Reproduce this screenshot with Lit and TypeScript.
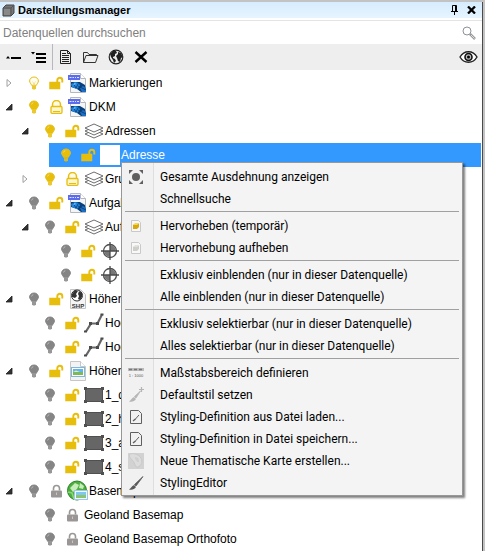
import { LitElement, html, css, svg, nothing } from "lit";
import { customElement } from "lit/decorators.js";
import { classMap } from "lit/directives/class-map.js";

const YELLOW = "#e8be0c";

const bulb = (state: string) => {
  const c = state === "off" ? "#858585" : YELLOW;
  return svg`<svg width="12" height="14" viewBox="0 0 12 14">
    <path d="M6 1C3.4 1 1.6 2.8 1.6 5c0 1.700 1.500 2.700 2 4.300h4.800c.5-1.600 2-2.600 2-4.300C10.400 2.800 8.600 1 6 1z"
      fill=${state === "outline" ? "#fffdf2" : c} stroke=${c} stroke-width="1"/>
    ${state === "outline" ? svg`<path d="M4.500 5.500L5.500 7v2.500M7.500 5.500L6.500 7v2.500" fill="none" stroke="#f0d97a" stroke-width=".7"/>` : svg`<path d="M3.500 4.500c.2-1 .9-1.700 1.800-1.900" fill="none" stroke="#fff" stroke-opacity=".5" stroke-width=".8"/>`}
    <path d="M4 10h4v2.200L7 13.500H5L4 12.200z" fill=${c} fill-opacity=".85"/>
  </svg>`;
};

const lock = (state: string) => {
  if (state === "open")
    return svg`<svg width="15" height="14" viewBox="0 0 15 14">
      <path d="M1 6.500h9.500v6H1z" fill=${YELLOW} stroke=${YELLOW} stroke-width="1.500"/>
      <path d="M8.300 7V4.300a2.500 2.500 0 0 1 5 0V6.500" fill="none" stroke=${YELLOW} stroke-width="1.900"/>
    </svg>`;
  if (state === "outline")
    return svg`<svg width="15" height="14" viewBox="0 0 15 14">
      <path d="M3.500 6.500V4.500a4 4 0 0 1 8 0V6.500" fill="#fffbe6" stroke=${YELLOW} stroke-width="1.500"/>
      <rect x="2" y="6.500" width="11" height="6.800" rx="1" fill="#fdf6d2" stroke=${YELLOW} stroke-width="1.300"/>
      <path d="M4 11.500h7" stroke=${YELLOW} stroke-width="1"/>
    </svg>`;
  return svg`<svg width="15" height="14" viewBox="0 0 15 14">
    <path d="M4.500 6.500V4.500a3 3 0 0 1 6 0V6.500" fill="none" stroke="#9a9696" stroke-width="1.600"/>
    <rect x="2" y="6.500" width="11" height="7" rx="1" fill="#9a9696"/>
    <path d="M7.500 8.500v2.500" stroke="#c8c6c6"/>
  </svg>`;
};

const kinds: Record<string, unknown> = {
  file: svg`<svg width="20" height="22" viewBox="0 0 20 22">
    <path d="M2.500 1.500h10l5 5v14h-15z" fill="#f4f5f7" stroke="#b4b8be"/>
    <path d="M12.500 1.500v5h5" fill="#fff" stroke="#b4b8be"/>
    <rect x="0" y="3" width="12" height="5" fill="#5c6cec"/>
    <path d="M1.500 5.500h2M4.500 5.500h1.500M7 5.500h1M9 5.500h2" stroke="#dfe3ff" stroke-width="1.200"/>
    <path d="M3 10h9l5 3 1 7h-5l-4-3-6-2z" fill="#0b3f7c"/>
    <path d="M3 12l4-2 4 1 1 3-3 3-5-2z" fill="#1f86e0"/>
    <path d="M12 16l3-2 3 2v4h-4z" fill="#1c6fc4"/>
    <path d="M5 11l3 5M11 10l-3 6M10 14l8 4" stroke="#0a2f5e" stroke-width=".7"/>
    <path d="M5 12l2-1 1 1-2 1z" fill="#74bdf8"/>
  </svg>`,
  layers: svg`<svg width="20" height="16" viewBox="0 0 20 16" fill="#fff" stroke="#5c5c5c" stroke-width=".9">
    <path d="M1 11l9-4 9 4-9 4z"/><path d="M1 8l9-4 9 4-9 4z"/><path d="M1 5l9-4 9 4-9 4z"/>
  </svg>`,
  blank: svg`<svg width="20" height="20" viewBox="0 0 20 20"><rect width="20" height="20" fill="#fff"/></svg>`,
  point: svg`<svg width="20" height="20" viewBox="0 0 20 20">
    <circle cx="10" cy="10" r="6.500" fill="#fff" stroke="#4c4c4c" stroke-width="1.300"/>
    <path d="M10 10V4a6 6 0 0 1 6 6zM10 10v6a6 6 0 0 1-6-6z" fill="#777"/>
    <path d="M10 1v18M1 10h18" stroke="#4c4c4c" stroke-width="1.300"/>
  </svg>`,
  shp: svg`<svg width="20" height="22" viewBox="0 0 20 22">
    <path d="M2.500 1.500h10l5 5v14h-15z" fill="#f5f5f5" stroke="#c4c4c4"/>
    <circle cx="9" cy="7.500" r="5.500" fill="#fff" stroke="#333"/>
    <path d="M4 6l3-4 3 1-2 3 1 2-2 2-3-1zM11 3l3 2v4l-2 3-2-1 1-3-1-2z" fill="#333"/>
    <rect x="3" y="14" width="14" height="6" fill="#f5f5f5"/>
    <text x="10" y="20" text-anchor="middle" font-family="Liberation Sans, sans-serif" font-weight="700" font-size="6" fill="#333">SHP</text>
  </svg>`,
  line: svg`<svg width="20" height="22" viewBox="0 0 20 22">
    <path d="M2 19.500L7 11.500H13.500L18 2.500" fill="none" stroke="#666" stroke-width="2.200"/>
    <path d="M0 18.500h3v2H0zM5 10h3v3H5zM12 10h3v3h-3zM16.500 1.500h3v2h-3z" fill="#4a4a4a"/>
  </svg>`,
  image: svg`<svg width="20" height="22" viewBox="0 0 20 22">
    <path d="M2.500 1.500h10l5 5v14h-15z" fill="#f3f3f3" stroke="#c6c6c6"/>
    <path d="M12.500 1.500v5h5" fill="#fff" stroke="#c6c6c6"/>
    <rect x="3.500" y="7.500" width="13" height="9" fill="#fff" stroke="#7fb6da"/>
    <rect x="5" y="9" width="10" height="3" fill="#5bb5ee"/>
    <rect x="5" y="12" width="10" height="3" fill="#7cb95a"/>
    <path d="M5 12l3-1.500 4 1.500z" fill="#e5ecb0"/>
  </svg>`,
  area: svg`<svg width="20" height="18" viewBox="0 0 20 18">
    <rect x="1.500" y="2.500" width="17" height="13" fill="#666" stroke="#505050"/>
    <path d="M0 1h3v3H0zM17 1h3v3h-3zM0 14h3v3H0zM17 14h3v3h-3z" fill="#505050"/>
  </svg>`,
  web: svg`<svg width="21" height="22" viewBox="0 0 21 22">
    <circle cx="10" cy="10.500" r="9.500" fill="#4caf3f" stroke="#2a8428"/>
    <path d="M3 8l5-5 4 2-2 4-4 3zM13 3l4 3-1 3-4-1z" fill="#c9ecbd"/>
    <path d="M1 12l4 1 2 6" fill="none" stroke="#8bd67c" stroke-width="1.500"/>
    <rect x="7.500" y="10.500" width="13" height="9" fill="#eef8ff" stroke="#9cc9e6"/>
    <rect x="9" y="12" width="10" height="3" fill="#7fc7f3"/>
    <rect x="9" y="15" width="10" height="3" fill="#8fc46a"/>
  </svg>`,
};

interface Node {
  level: number;
  label: string;
  kind?: string;
  arrow?: "open" | "closed";
  bulb: string;
  lock: string;
  selected?: boolean;
}

const nodes: Node[] = [
  { level: 0, label: "Markierungen", kind: "file", arrow: "closed", bulb: "outline", lock: "open" },
  { level: 0, label: "DKM", kind: "file", arrow: "open", bulb: "on", lock: "outline" },
  { level: 1, label: "Adressen", kind: "layers", arrow: "open", bulb: "on", lock: "open" },
  { level: 2, label: "Adresse", kind: "blank", bulb: "on", lock: "open", selected: true },
  { level: 1, label: "Grund", kind: "layers", arrow: "closed", bulb: "on", lock: "outline" },
  { level: 0, label: "Aufgabe", kind: "file", arrow: "open", bulb: "off", lock: "open" },
  { level: 1, label: "Aufgabe", kind: "layers", arrow: "open", bulb: "off", lock: "open" },
  { level: 2, label: "", kind: "point", bulb: "off", lock: "open" },
  { level: 2, label: "", kind: "point", bulb: "off", lock: "open" },
  { level: 0, label: "Höhen", kind: "shp", arrow: "open", bulb: "off", lock: "open" },
  { level: 1, label: "Hoch", kind: "line", bulb: "off", lock: "open" },
  { level: 1, label: "Hoch", kind: "line", bulb: "off", lock: "open" },
  { level: 0, label: "Höhen", kind: "image", arrow: "open", bulb: "off", lock: "open" },
  { level: 1, label: "1_d", kind: "area", bulb: "off", lock: "open" },
  { level: 1, label: "2_h", kind: "area", bulb: "off", lock: "open" },
  { level: 1, label: "3_a", kind: "area", bulb: "off", lock: "open" },
  { level: 1, label: "4_s", kind: "area", bulb: "off", lock: "open" },
  { level: 0, label: "Basemap", kind: "web", arrow: "open", bulb: "off", lock: "closed" },
  { level: 1, label: "Geoland Basemap", bulb: "off", lock: "closed" },
  { level: 1, label: "Geoland Basemap Orthofoto", bulb: "off", lock: "closed" },
];

const page = (fill: string, top: string) => svg`<svg width="16" height="16" viewBox="0 0 16 16">
  <path d="M3.500 2.500h7l2 2v9h-9z" fill="#f8f8f8" stroke="#c9c9c9"/>
  <path d="M5 7l2-1.500h4V9l-2 2H5z" fill=${fill}/><path d="M5 7l2-1.500h4L9 7z" fill=${top}/>
</svg>`;
const style = svg`<svg width="16" height="16" viewBox="0 0 16 16" fill="none" stroke="#5f5f5f" stroke-width="1">
  <path d="M2.500 1.500h8l3 3v10h-11z"/><path d="M11 6L7 10.500"/><path d="M5 12l2.500-2" stroke-width="1.500"/>
</svg>`;
const brush = (c: string, plus: boolean) => svg`<svg width="16" height="16" viewBox="0 0 16 16">
  <path d="M${plus ? "12.500 4" : "15 1.500"}L6.500 9.500 8 11z" fill=${c} stroke=${c} stroke-width=".8"/>
  <path d="M6 10l2 2c-1.500 2.500-4 3-7 2.500C3 13.500 3.500 11 6 10z" fill=${c}/>
  ${plus ? svg`<path d="M13.500 0v5M11 2.500h5" stroke=${c} stroke-width="1.200"/>` : nothing}
</svg>`;

const menu: ({ label: string; icon?: unknown } | null)[] = [
  {
    label: "Gesamte Ausdehnung anzeigen",
    icon: svg`<svg width="16" height="16" viewBox="0 0 16 16" fill="#5f5f5f">
      <circle cx="8" cy="8" r="4"/>
      <path d="M1 1h4L1 5zM15 1v4l-4-4zM1 15v-4l4 4zM15 15h-4l4-4z"/>
    </svg>`,
  },
  { label: "Schnellsuche" },
  null,
  { label: "Hervorheben (temporär)", icon: page("#d9a90c", "#f7d94c") },
  { label: "Hervorhebung aufheben", icon: page("#cfcfca", "#e2e2dc") },
  null,
  { label: "Exklusiv einblenden (nur in dieser Datenquelle)" },
  { label: "Alle einblenden (nur in dieser Datenquelle)" },
  null,
  { label: "Exklusiv selektierbar (nur in dieser Datenquelle)" },
  { label: "Alles selektierbar (nur in dieser Datenquelle)" },
  null,
  {
    label: "Maßstabsbereich definieren",
    icon: svg`<svg width="16" height="16" viewBox="0 0 16 16">
      <path d="M0 4.500h16" stroke="#bbb" stroke-width="3"/>
      <path d="M1 4.500h3M6 4.500h3M11 4.500h3" stroke="#777" stroke-width="1.500"/>
      <text x="8" y="12" text-anchor="middle" font-family="Liberation Sans, sans-serif" font-size="4" fill="#555">1 : 1000</text>
    </svg>`,
  },
  { label: "Defaultstil setzen", icon: brush("#b5b5b5", true) },
  { label: "Styling-Definition aus Datei laden...", icon: style },
  { label: "Styling-Definition in Datei speichern...", icon: style },
  {
    label: "Neue Thematische Karte erstellen...",
    icon: svg`<svg width="16" height="16" viewBox="0 0 16 16">
      <rect width="16" height="16" fill="#d2d2d2"/>
      <path d="M2 1c3-1 9 0 11 4s0 8-3 9-3-4-5-6-5-5-3-7z" fill="#dcdcdc" stroke="#c9c9c9"/>
      <path d="M7 4c2 0 4 1 4 4s-4 0-4-4z" fill="#cfcfcf"/>
    </svg>`,
  },
  { label: "StylingEditor", icon: brush("#5a5a5a", false) },
];

@customElement("app-root")
export class AppRoot extends LitElement {
  static styles = css`
    :host {
      display: block;
      position: relative;
      min-height: 100vh;
      box-sizing: border-box;
      overflow: hidden;
      background: #fff;
      border-top: 2px solid #c3c3c3;
      border-right: 2px solid #c3c3c3;
      font: 12px/16px "Liberation Sans", Arial, sans-serif;
      color: #000;
    }
    .panel {
      border-right: 1px solid #4a4a4a;
      min-height: calc(100vh - 2px);
      box-sizing: border-box;
    }
    button {
      display: flex;
      align-items: center;
      justify-content: center;
      padding: 0;
      border: 0;
      background: none;
      font: inherit;
      color: inherit;
    }
    svg { display: block; flex: none; }
    header {
      display: flex;
      align-items: center;
      gap: 8px;
      height: 16px;
      padding: 0 6px 0 2px;
      background: linear-gradient(#d6ecfd, #e6f4ff);
    }
    h1 {
      flex: 1;
      margin: 0 0 0 -5px;
      font: bold 11px/16px "Liberation Sans", Arial, sans-serif;
    }
    .search {
      display: flex;
      align-items: center;
      height: 24px;
      margin-top: 2px;
      padding: 0 6px 0 3px;
      border-top: 1px solid #e4e4e4;
      box-sizing: border-box;
    }
    input {
      flex: 1;
      min-width: 0;
      padding: 0;
      border: 0;
      outline: 0;
      background: none;
      font: inherit;
    }
    input::placeholder { color: #808080; opacity: 1; }
    .toolbar {
      display: flex;
      align-items: center;
      height: 26px;
      padding: 0 4px 0 2px;
      background: #eee;
    }
    .tool { width: 25px; height: 26px; }
    .bar { width: 1px; height: 26px; background: #b8b8bc; }
    .spacer { flex: 1; }
    .tree {
      margin: 0;
      padding: 1px 1px 0 0;
      list-style: none;
    }
    .row { display: flex; height: 24px; }
    .l1 { padding-left: 16px; }
    .l2 { padding-left: 32px; }
    .arrow { box-sizing: border-box; width: 17px; padding-left: 1px; flex: none; }
    .entry {
      display: flex;
      flex: 1;
      align-items: center;
      padding-left: 6px;
      white-space: nowrap;
    }
    .selected { background: #3399ff; color: #fff; }
    .flag { width: 22px; height: 24px; flex: none; }
    .kind { display: flex; justify-content: center; width: 21px; }
    .name { padding-left: 1px; }
    .menu {
      position: absolute;
      left: 121px;
      top: 160px;
      width: 342px;
      box-sizing: border-box;
      padding: 3px 2px 1px;
      border: 1px solid #979797;
      background: linear-gradient(90deg, #f1f1f1 31px, #dedede 31px, #dedede 32px, #f4f4f4 32px);
      box-shadow: 2px 2px 2px rgba(0, 0, 0, 0.5);
      font: 12px/22px Roboto, "Open Sans", sans-serif;
    }
    .item {
      width: 100%;
      height: 22px;
      justify-content: flex-start;
      white-space: nowrap;
    }
    .pic { display: flex; width: 16px; margin: 0 16px 0 4px; }
    hr {
      height: 1px;
      margin: 1px 1px 3px;
      border: 0;
      background: #a0a0a0;
    }
  `;

  render() {
    return html`
      <div class="panel">
        <header>
          <svg width="13" height="13" viewBox="0 0 13 13">
            <path d="M1 4l3-3h8v8l-3 3H1z" fill="#777" stroke="#444"/>
            <path d="M1 4h8v8M9 4l3-3" fill="none" stroke="#555"/><path d="M2 5h6v6H2z" fill="#888"/>
          </svg>
          <h1>Darstellungsmanager</h1>
          <button aria-label="Anheften">
            <svg width="9" height="10" viewBox="0 0 9 10" fill="none" stroke="#000"><path d="M2.500 6V.5h4V6M1 6.500h7M4.500 7v3M5.500 1v5"/></svg>
          </button>
          <button aria-label="Schließen">
            <svg width="9" height="8" viewBox="0 0 9 8"><path d="M1 .5l7 7M8 .5l-7 7" stroke="#000" stroke-width="2.300"/></svg>
          </button>
        </header>
        <div class="search">
          <input type="text" aria-label="Datenquellen durchsuchen" placeholder="Datenquellen durchsuchen" />
          <button aria-label="Suchen">
            <svg width="14" height="14" viewBox="0 0 14 14" fill="none" stroke="#999">
              <circle cx="5" cy="5" r="4" stroke="#8c9199"/><path d="M8 8l5 5" stroke-width="2.500"/><path d="M9 9l3.500 3.500" stroke="#ddd"/>
            </svg>
          </button>
        </div>
        <div class="toolbar" role="toolbar">
          <button class="tool" aria-label="Alle zuklappen">
            <svg width="18" height="16" viewBox="0 0 18 16"><path d="M0 9.500l2-2.500L4 9.500z"/><path d="M5 9h10" stroke="#000" stroke-width="2"/></svg>
          </button>
          <button class="tool" aria-label="Alle aufklappen">
            <svg width="18" height="16" viewBox="0 0 18 16"><path d="M0 3h4L2 5.500z"/><path d="M5 5h10M5 9h10M5 13h10" stroke="#000" stroke-width="2"/></svg>
          </button>
          <span class="bar"></span>
          <button class="tool" aria-label="Dokument">
            <svg width="12" height="16" viewBox="0 0 12 16" fill="none" stroke="#222"><path d="M.5 1.500h7l3 3v10H.5z"/><path d="M7.500 1.500v3h3M2 4.500h4M2 6.500h7M2 8.500h7M2 10.500h7M2 12.500h7"/></svg>
          </button>
          <button class="tool" aria-label="Ordner">
            <svg width="16" height="14" viewBox="0 0 16 14" fill="none" stroke="#333"><path d="M.5 12.500v-10h4l1.500 2H13.500V6M.5 12.500L3 5.500H15L12.500 12.500z"/></svg>
          </button>
          <button class="tool" aria-label="Globus">
            <svg width="16" height="16" viewBox="0 0 16 16"><circle cx="8" cy="8" r="6.800" fill="#eee" stroke="#222" stroke-width="1.200"/><path d="M2 5l3-3 3 0 1 2-2 1 0 2-2 1 0 1 2 1 1 2-2 2-1-3-2-3zM10 3l3 1 2 4-2 1-1 4-2-1-1-3-1-2 2-2z" fill="#222"/></svg>
          </button>
          <button class="tool" aria-label="Löschen">
            <svg width="14" height="14" viewBox="0 0 14 14"><path d="M1.500 2l11 10M12.500 2l-11 10" stroke="#000" stroke-width="2.400"/></svg>
          </button>
          <span class="spacer"></span>
          <button aria-label="Sichtbarkeit">
            <svg width="19" height="14" viewBox="0 0 19 14"><path d="M1 7c4-7 13-7 17 0-4 7-13 7-17 0z" fill="#fff" stroke="#222" stroke-width="1.400"/><circle cx="9.500" cy="7" r="3.500" fill="#bbb" stroke="#111" stroke-width="1.600"/><circle cx="9.500" cy="7" r="1.500"/></svg>
          </button>
        </div>
        <ul class="tree" role="tree">
          ${nodes.map(
            (n) => html`<li
              class=${classMap({ row: true, l1: n.level === 1, l2: n.level === 2 })}
              role="treeitem"
              aria-selected=${n.selected ? "true" : "false"}
            >
              ${n.arrow
                ? html`<button class="arrow" aria-label="Auf- oder zuklappen">
                    ${n.arrow === "open"
                      ? svg`<svg width="8" height="8" viewBox="0 0 8 8"><path d="M7 1v6H1z" fill="#333" stroke="#222" stroke-width=".8"/></svg>`
                      : svg`<svg width="8" height="10" viewBox="0 0 8 10"><path d="M2 1.500v7L6 5z" fill="#fff" stroke="#a0a0a0"/></svg>`}
                  </button>`
                : html`<span class="arrow"></span>`}
              <div class=${classMap({ entry: true, selected: !!n.selected })}>
                <button class="flag" aria-label="Sichtbar">${bulb(n.bulb)}</button>
                <button class="flag" aria-label="Selektierbar">${lock(n.lock)}</button>
                ${n.kind ? html`<span class="kind">${kinds[n.kind]}</span>` : nothing}
                <span class="name">${n.label}</span>
              </div>
            </li>`
          )}
        </ul>
      </div>
      <div class="menu" role="menu">
        ${menu.map((m) =>
          m
            ? html`<button class="item" role="menuitem"><span class="pic">${m.icon ?? nothing}</span>${m.label}</button>`
            : html`<hr />`
        )}
      </div>
    `;
  }
}
